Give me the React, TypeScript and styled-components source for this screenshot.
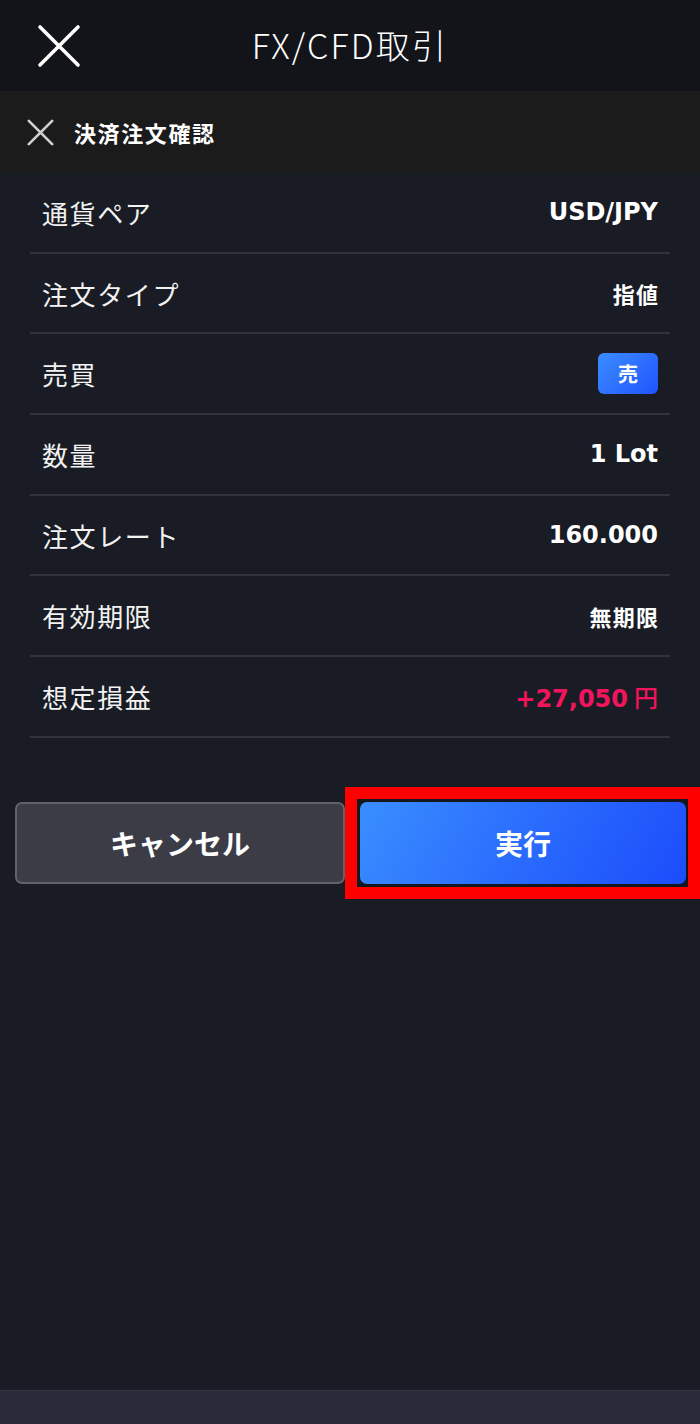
import styled, { createGlobalStyle } from "styled-components";

const GlobalStyle = createGlobalStyle`
  html, body {
    margin: 0;
    padding: 0;
    background: #191c24;
  }
  #root {
    min-height: 100vh;
  }
  * { box-sizing: border-box; }
`;

const JP = `"Noto Sans CJK JP", "Noto Sans", sans-serif`;
const LATIN = `"DejaVu Sans", "Noto Sans CJK JP", sans-serif`;

const Page = styled.div`
  display: flex;
  flex-direction: column;
  min-height: 100vh;
  background: #191c24;
  font-family: ${JP};
  color: #fff;
`;

const Header = styled.header`
  height: 91px;
  background: #131419;
  display: grid;
  grid-template-columns: 120px 1fr 120px;
  align-items: center;
`;

const CloseButton = styled.button`
  background: none;
  border: 0;
  padding: 0;
  margin-left: 35px;
  width: 48px;
  height: 48px;
  display: flex;
  align-items: center;
  justify-content: center;
`;

const Title = styled.h1`
  margin: 0 0 3px;
  text-align: center;
  font-family: ${JP};
  font-weight: 300;
  font-size: 34px;
  letter-spacing: 2.2px;
  color: #fff;
`;

const SubHeader = styled.div`
  height: 82px;
  background: #1b1b1c;
  display: flex;
  align-items: center;
  gap: 20px;
  padding-left: 27px;
`;

const SubTitle = styled.span`
  font-size: 22px;
  font-weight: 700;
  letter-spacing: 1.6px;
  color: #fff;
`;

const Body = styled.main`
  flex: 1;
  display: flex;
  flex-direction: column;
`;

const List = styled.dl`
  margin: 0 30px;
  display: flex;
  flex-direction: column;
`;

const Row = styled.div`
  height: 80.7px;
  display: flex;
  align-items: center;
  justify-content: space-between;
  padding: 0 12px;
  border-bottom: 2px solid #30333a;
`;

const Label = styled.dt`
  margin: 0;
  font-size: 26px;
  font-weight: 400;
  letter-spacing: 1.6px;
  color: #f2f2f2;
`;

const Value = styled.dd<{ $jp?: boolean; $tone?: "plus" }>`
  margin: 0;
  font-family: ${(p) => (p.$jp ? JP : LATIN)};
  font-weight: 700;
  font-size: ${(p) => (p.$jp ? "22px" : "24px")};
  letter-spacing: ${(p) => (p.$jp ? "1.2px" : "0")};
  margin-right: ${(p) => (p.$jp ? "-1.2px" : "0")};
  color: ${(p) => (p.$tone === "plus" ? "#f2145c" : "#fff")};
`;

const Yen = styled.span`
  font-family: ${JP};
  font-weight: 500;
  margin-left: 6px;
`;

const SideBadge = styled.span`
  display: inline-flex;
  align-items: center;
  justify-content: center;
  width: 60px;
  height: 41px;
  border-radius: 6px;
  background: linear-gradient(135deg, #3c8dff 0%, #1f54ff 100%);
  font-family: ${JP};
  font-size: 20px;
  font-weight: 700;
  color: #fff;
`;

const Actions = styled.div`
  display: flex;
  align-items: center;
  padding-left: 15px;
  margin-top: 49px;
`;

const CancelButton = styled.button`
  width: 330px;
  height: 82px;
  border-radius: 7px;
  border: 2px solid #61626b;
  background: #3b3c46;
  color: #fff;
  font-family: ${JP};
  font-size: 28px;
  font-weight: 700;
`;

const Highlight = styled.div`
  flex: 1;
  border: 12px solid #ff0000;
  padding: 3px 2px 3px 3px;
  background: #15171d;
`;

const ExecuteButton = styled.button`
  display: block;
  width: 100%;
  height: 82px;
  border: 0;
  border-radius: 7px;
  background: linear-gradient(120deg, #3a8eff 0%, #2a6cfd 50%, #1c4cfb 100%);
  color: #fff;
  font-family: ${JP};
  font-size: 28px;
  font-weight: 700;
`;

const BottomBar = styled.footer`
  height: 34px;
  background: #292b39;
  border-top: 1px solid #31333f;
`;

const XIcon = ({ size, stroke, color }: { size: number; stroke: number; color: string }) => (
  <svg width={size} height={size} viewBox="0 0 44 44" aria-hidden="true">
    <path d="M3 3 L41 41 M41 3 L3 41" stroke={color} strokeWidth={stroke} strokeLinecap="round" fill="none" />
  </svg>
);

const rows = [
  { label: "通貨ペア", value: <Value>USD/JPY</Value> },
  { label: "注文タイプ", value: <Value $jp>指値</Value> },
  { label: "売買", value: <SideBadge>売</SideBadge> },
  { label: "数量", value: <Value>1 Lot</Value> },
  { label: "注文レート", value: <Value>160.000</Value> },
  { label: "有効期限", value: <Value $jp>無期限</Value> },
  {
    label: "想定損益",
    value: (
      <Value $tone="plus">
        +27,050<Yen>円</Yen>
      </Value>
    ),
  },
];

export default function App() {
  return (
    <>
      <GlobalStyle />
      <Page>
        <Header>
          <CloseButton aria-label="閉じる">
            <XIcon size={44} stroke={3.6} color="#ffffff" />
          </CloseButton>
          <Title>FX/CFD取引</Title>
          <div />
        </Header>
        <SubHeader>
          <XIcon size={27} stroke={4.4} color="#cfcfcf" />
          <SubTitle>決済注文確認</SubTitle>
        </SubHeader>
        <Body>
          <List>
            {rows.map((r) => (
              <Row key={r.label}>
                <Label>{r.label}</Label>
                {r.value}
              </Row>
            ))}
          </List>
          <Actions>
            <CancelButton>キャンセル</CancelButton>
            <Highlight>
              <ExecuteButton>実行</ExecuteButton>
            </Highlight>
          </Actions>
        </Body>
        <BottomBar />
      </Page>
    </>
  );
}
